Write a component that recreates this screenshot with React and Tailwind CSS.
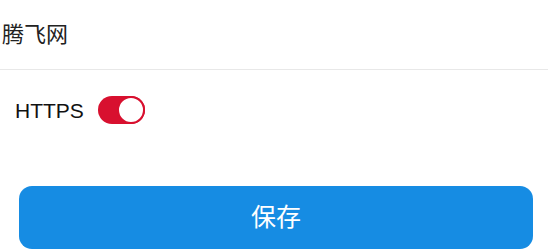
import React, { useState } from 'react';

const App = () => {
    const [https, setHttps] = useState(true);

    return (
        <div className="w-[548px] h-[252px] bg-white overflow-hidden" style={{ fontFamily: '"Liberation Sans", "Noto Sans CJK SC", sans-serif' }}>
            {/* Site name */}
            <div className="h-[70px] flex items-center pl-[2px] border-b border-[#e8e8e8]">
                <span className="text-[22px] text-[#222] leading-none">腾飞网</span>
            </div>

            {/* HTTPS switch */}
            <div className="h-[80px] flex items-center pl-[15px] pt-[1px]">
                <span className="text-[21px] text-[#111] leading-none mr-[14px]">HTTPS</span>
                <button
                    onClick={() => setHttps(!https)}
                    className={`relative w-[47px] h-[28px] rounded-full -mt-[2px] ${https ? 'bg-[#d8102f]' : 'bg-[#e5e5e5]'}`}
                >
                    <span className={`absolute top-0 w-[28px] h-[28px] rounded-full bg-white border-2 ${https ? 'right-0 border-[#d8102f]' : 'left-0 border-[#e5e5e5]'}`} />
                </button>
            </div>

            {/* Save */}
            <div className="pt-[36px] pl-[19px]">
                <button className="w-[514px] h-[63px] rounded-[13px] bg-[#168ce3] text-white text-[25px] flex items-center justify-center">
                    保存
                </button>
            </div>
        </div>
    );
};

export default App;
